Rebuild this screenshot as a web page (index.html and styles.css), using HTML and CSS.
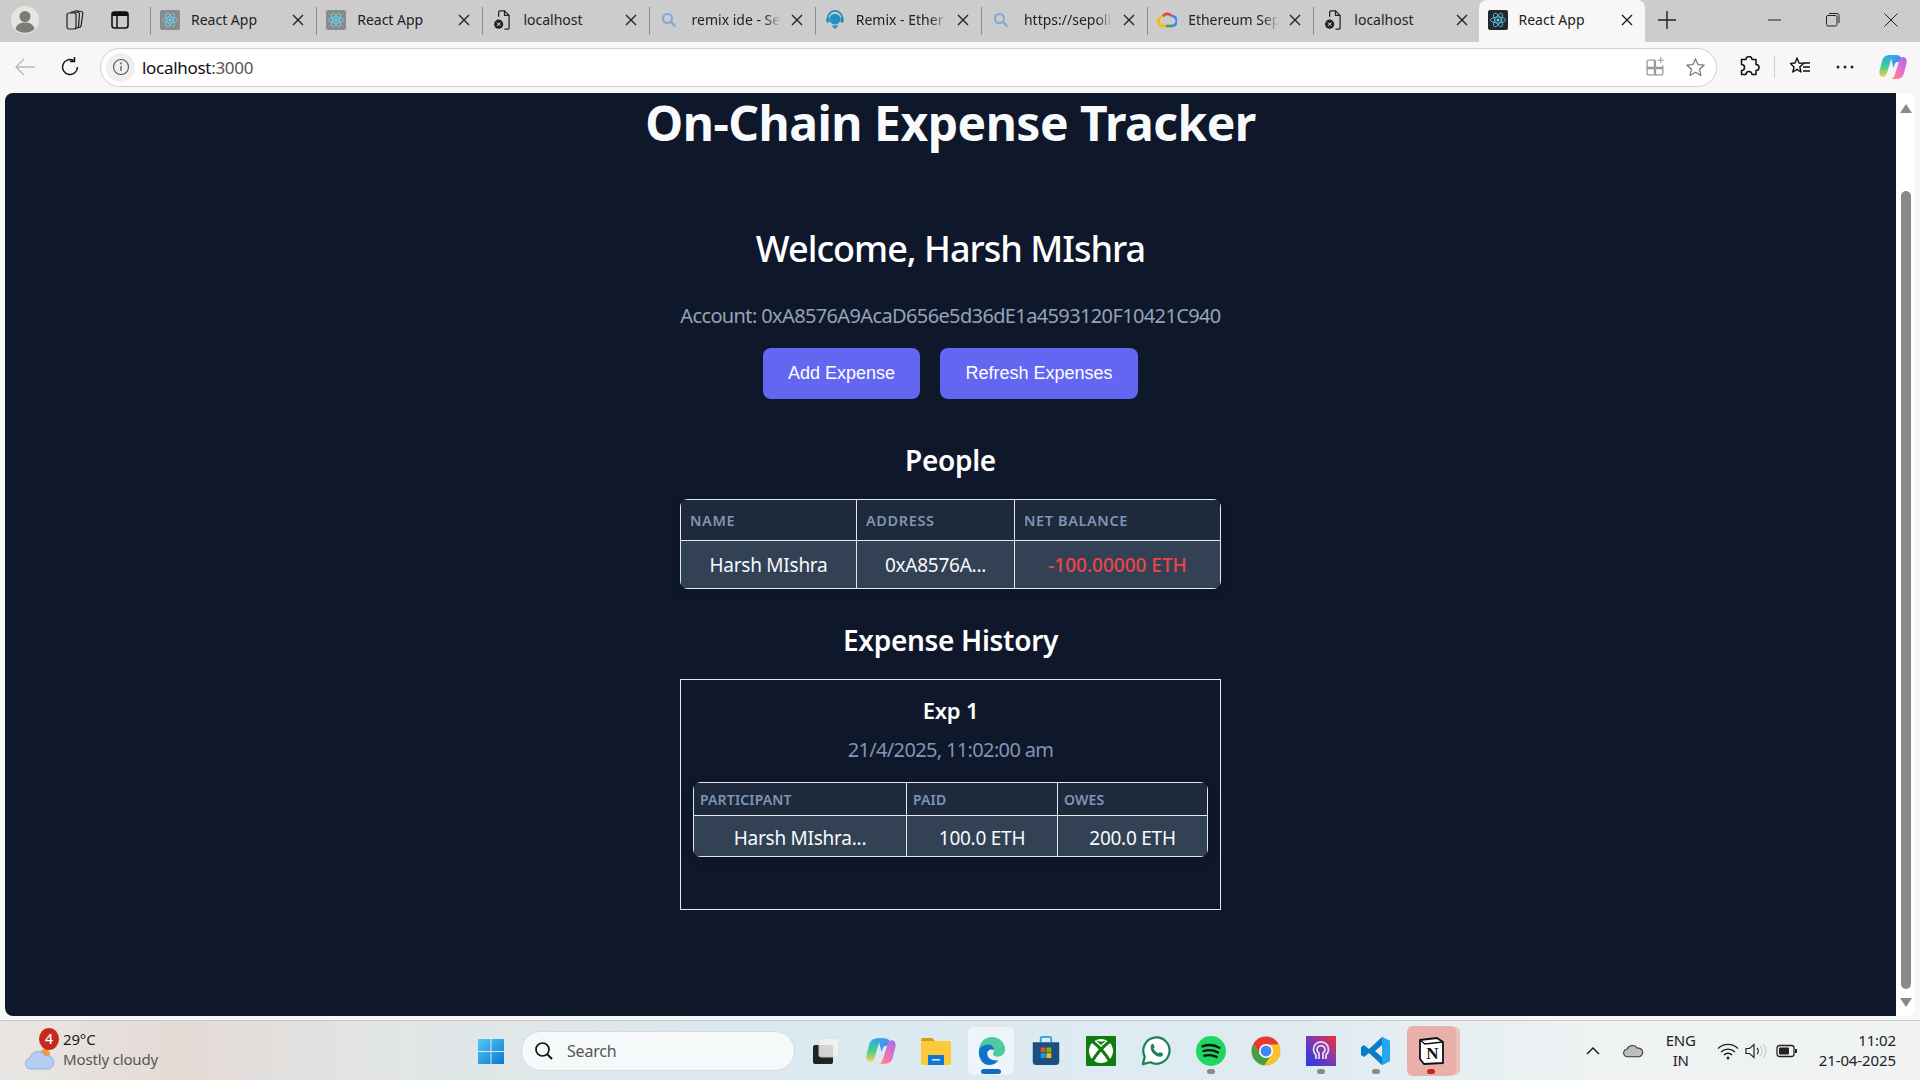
FILE: index.html
```html
<!DOCTYPE html>
<html lang="en">
<head>
<meta charset="utf-8">
<title>React App</title>
<link rel="stylesheet" href="styles.css">
</head>
<body>
<svg class="defs" width="0" height="0" aria-hidden="true">
  <defs>
    <linearGradient id="cp3" x1="0" y1="0" x2="0" y2="1"><stop offset="0" stop-color="#2aa8f0"/><stop offset=".55" stop-color="#45cf8a"/><stop offset="1" stop-color="#ffd040"/></linearGradient>
    <linearGradient id="cp2" x1="1" y1="0" x2="0" y2="1"><stop offset="0" stop-color="#a06cf0"/><stop offset=".55" stop-color="#f070c0"/><stop offset="1" stop-color="#ff9060"/></linearGradient>
    <linearGradient id="cp1" x1="0" y1="0" x2="1" y2="1"><stop offset="0" stop-color="#38a8f0"/><stop offset="1" stop-color="#4a7cf0"/></linearGradient>
  </defs>
  <symbol id="copilot" viewBox="0 0 28 28">
    <path d="M11 2h6c-3 0-4 2-5 5L8 20c-.7 2-2 4-4 4-3 0-4-3-3.500-6L3 8C4 4 7 2 11 2z" fill="url(#cp3)"/>
    <path d="M11 2h6c3 0 5 1 5.500 4l1 3h-4.500c-2 0-3 1-3.500 3l-1 3-2-8c-.3-3-1-5-1.500-5z" fill="url(#cp1)"/>
    <path d="M17 26h-6c3 0 4-2 5-5l4-13c.7-2 2-4 4-4 3 0 4 3 3.500 6L25 20c-1 4-4 6-8 6z" fill="url(#cp2)"/>
  </symbol>
  <symbol id="atom" viewBox="0 0 24 24">
    <g fill="none" stroke="#61dafb" stroke-width="1">
      <ellipse cx="12" cy="12" rx="10" ry="4"/>
      <ellipse cx="12" cy="12" rx="10" ry="4" transform="rotate(60 12 12)"/>
      <ellipse cx="12" cy="12" rx="10" ry="4" transform="rotate(120 12 12)"/>
    </g>
    <circle cx="12" cy="12" r="2" fill="#61dafb"/>
  </symbol>
  <symbol id="x" viewBox="0 0 12 12"><path d="M1 1l10 10M11 1L1 11" fill="none" stroke="#222" stroke-width="1.400"/></symbol>
  <symbol id="filex" viewBox="0 0 20 24">
    <path d="M6 8V2.500A1.500 1.500 0 0 1 7.500 1h5.500l5.500 5.500v15A1.500 1.500 0 0 1 17 23h-4" fill="none" stroke="#222" stroke-width="1.500"/>
    <path d="M13 1v5.500h5.500" fill="none" stroke="#222" stroke-width="1.500"/>
    <circle cx="6" cy="17" r="5.500" fill="#222"/>
    <path d="M4 15l4 4M8 15l-4 4" stroke="#fff" stroke-width="1.200"/>
  </symbol>
  <symbol id="mag" viewBox="0 0 16 16"><circle cx="6.500" cy="6.500" r="4.500" fill="none" stroke="#7fa9d4" stroke-width="2"/><path d="M10 10l4.500 4.500" stroke="#7fa9d4" stroke-width="2.200"/></symbol>
</svg>

<div class="browser">
  <header class="tabstrip">
    <div class="strip-left">
      <svg class="avatar" viewBox="0 0 28 28"><circle cx="14" cy="14" r="14" fill="#e6e6e0"/><circle cx="14" cy="10.500" r="5.500" fill="#7b7b78"/><path d="M4.500 23c1-5 5-6.500 9.500-6.500s8.500 1.500 9.500 6.500A14 14 0 0 1 4.500 23z" fill="#7b7b78"/></svg>
      <svg class="strip-ico" viewBox="0 0 22 22"><g fill="none" stroke="#222" stroke-width="1.200"><rect x="9" y="2" width="9" height="16" rx="2" transform="rotate(8 13 10)"/><rect x="6" y="3" width="9" height="16" rx="2" transform="rotate(4 10 11)" fill="#ccc"/><rect x="3" y="4" width="9" height="16" rx="2" fill="#ccc"/></g></svg>
      <svg class="strip-ico strip-ico-last" viewBox="0 0 22 22"><rect x="3" y="3" width="16" height="16" rx="2.500" fill="none" stroke="#111" stroke-width="1.600"/><path d="M3 5.500A2.500 2.500 0 0 1 5.500 3h11A2.500 2.500 0 0 1 19 5.500V7H3z" fill="#111"/><path d="M8 7v12" stroke="#111" stroke-width="1.500"/></svg>
    </div>
    <div class="tabs">
      <div class="tab"><span class="fav fav-grey"><svg class="fav-in"><use href="#atom"/></svg></span><span class="tab-title">React App</span><svg class="tab-x"><use href="#x"/></svg></div>
      <div class="tab"><span class="fav fav-grey"><svg class="fav-in"><use href="#atom"/></svg></span><span class="tab-title">React App</span><svg class="tab-x"><use href="#x"/></svg></div>
      <div class="tab"><svg class="fav"><use href="#filex"/></svg><span class="tab-title">localhost</span><svg class="tab-x"><use href="#x"/></svg></div>
      <div class="tab"><svg class="fav fav-mag"><use href="#mag"/></svg><span class="tab-title tab-fade">remix ide - Se</span><svg class="tab-x"><use href="#x"/></svg></div>
      <div class="tab"><svg class="fav" viewBox="0 0 20 22"><circle cx="10" cy="10" r="6" fill="#1f8fc4"/><path d="M2 13V9a8 8 0 0 1 16 0v4" fill="none" stroke="#1f8fc4" stroke-width="2"/><rect x="0.500" y="8" width="3.500" height="6" rx="1.500" fill="#1f8fc4"/><rect x="16" y="8" width="3.500" height="6" rx="1.500" fill="#1f8fc4"/><path d="M6 17h8l-4 4z" fill="#1f8fc4"/></svg><span class="tab-title tab-fade">Remix - Ether</span><svg class="tab-x"><use href="#x"/></svg></div>
      <div class="tab"><svg class="fav fav-mag"><use href="#mag"/></svg><span class="tab-title tab-fade">https://sepoli</span><svg class="tab-x"><use href="#x"/></svg></div>
      <div class="tab"><svg class="fav" viewBox="0 0 20 20"><path d="M6 6.500A5 5 0 0 1 14.500 6" fill="none" stroke="#ea4335" stroke-width="2.600"/><path d="M14.500 6A5 5 0 0 1 15 16" fill="none" stroke="#4285f4" stroke-width="2.600"/><path d="M15 16H9" fill="none" stroke="#34a853" stroke-width="2.600"/><path d="M9 16H5.500a4.500 4.500 0 0 1-1-8.800" fill="none" stroke="#fbbc05" stroke-width="2.600"/></svg><span class="tab-title tab-fade">Ethereum Sep</span><svg class="tab-x"><use href="#x"/></svg></div>
      <div class="tab"><svg class="fav"><use href="#filex"/></svg><span class="tab-title">localhost</span><svg class="tab-x"><use href="#x"/></svg></div>
      <div class="tab tab-active"><span class="fav fav-dark"><svg class="fav-in"><use href="#atom"/></svg></span><span class="tab-title">React App</span><svg class="tab-x"><use href="#x"/></svg></div>
      <svg class="newtab" viewBox="0 0 18 18"><path d="M9 0v18M0 9h18" stroke="#222" stroke-width="1.400"/></svg>
    </div>
    <div class="winctl">
      <svg class="win-ico" viewBox="0 0 14 14"><path d="M0 7h13" stroke="#222" stroke-width="1"/></svg>
      <svg class="win-ico" viewBox="0 0 14 14"><rect x="0.500" y="2.500" width="10.500" height="10.500" rx="1.500" fill="none" stroke="#222"/><path d="M3 .5h8a2 2 0 0 1 2 2V10" fill="none" stroke="#222"/></svg>
      <svg class="win-ico" viewBox="0 0 14 14"><path d="M.5.500l13 13M13.500.500l-13 13" stroke="#222" stroke-width="1"/></svg>
    </div>
  </header>

  <nav class="toolbar">
    <svg class="back" viewBox="0 0 22 20"><path d="M21 10H2M10 2l-8 8 8 8" fill="none" stroke="#b9b9b9" stroke-width="1.400"/></svg>
    <svg class="reload" viewBox="0 0 22 22"><path d="M18.500 11A7.500 7.500 0 1 1 14.500 4.400M15.500 1v4.500H11" fill="none" stroke="#111" stroke-width="1.500"/></svg>
    <div class="addressbar">
      <span class="info"><svg class="info-ico" viewBox="0 0 18 18"><circle cx="9" cy="9" r="7.500" fill="none" stroke="#555" stroke-width="1.100"/><path d="M9 8v5" stroke="#555" stroke-width="1.300"/><circle cx="9" cy="5.500" r="0.900" fill="#555"/></svg></span>
      <span class="url">localhost<span class="url-port">:3000</span></span>
      <span class="spacer"></span>
      <svg class="addr-ico" viewBox="0 0 20 20"><path d="M9 3H3a1 1 0 0 0-1 1v6h7zM2 11v5a1 1 0 0 0 1 1h6v-6zM10 11v6h6a1 1 0 0 0 1-1v-5zM10 10V3M10 10h7V8" fill="none" stroke="#999" stroke-width="1.200"/><path d="M15 0v6M12 3h6" stroke="#999" stroke-width="1"/></svg>
      <svg class="addr-ico" viewBox="0 0 22 22"><path d="M11 2l2.700 6 6.300.600-4.800 4.300 1.500 6.400L11 16l-5.700 3.300 1.500-6.400L2 8.600 8.300 8z" fill="none" stroke="#777" stroke-width="1.300" stroke-linejoin="round"/></svg>
    </div>
    <div class="tools">
      <svg class="tool" viewBox="0 0 22 22"><path d="M8 3.500a3 3 0 0 1 6 0h4v5a3 3 0 0 1 0 6v4h-4a3 3 0 0 0-6 0H3.500v-4a3 3 0 0 0 0-6v-5z" fill="none" stroke="#111" stroke-width="1.500" stroke-linejoin="round"/></svg>
      <span class="tool-div"></span>
      <svg class="tool" viewBox="0 0 22 22"><path d="M8 2l2 5 4.500.400L10.800 11l1.200 5-4-2.700L3.800 16 5 11 1.500 7.400 6 7z" fill="none" stroke="#111" stroke-width="1.400" stroke-linejoin="round"/><path d="M14 7h7M14 11h7M14 15h7" stroke="#111" stroke-width="1.300"/></svg>
      <svg class="tool" viewBox="0 0 22 22"><circle cx="4" cy="11" r="1.500" fill="#222"/><circle cx="11" cy="11" r="1.500" fill="#222"/><circle cx="18" cy="11" r="1.500" fill="#222"/></svg>
      <svg class="tool tool-copilot" viewBox="0 0 28 28"><use href="#copilot"/></svg>
    </div>
  </nav>

  <div class="viewport">
    <main class="page">
      <h1 class="title">On-Chain Expense Tracker</h1>
      <h2 class="welcome">Welcome, Harsh MIshra</h2>
      <p class="account">Account: 0xA8576A9AcaD656e5d36dE1a4593120F10421C940</p>
      <div class="actions">
        <button class="btn btn-add" type="button">Add Expense</button>
        <button class="btn btn-refresh" type="button">Refresh Expenses</button>
      </div>
      <h3 class="section">People</h3>
      <table class="grid grid-people">
        <colgroup><col class="c-name"><col class="c-addr"><col class="c-bal"></colgroup>
        <thead><tr><th>Name</th><th>Address</th><th>Net Balance</th></tr></thead>
        <tbody><tr><td>Harsh MIshra</td><td>0xA8576A...</td><td class="neg">-100.00000 ETH</td></tr></tbody>
      </table>
      <h3 class="section section-history">Expense History</h3>
      <article class="card">
        <h4 class="card-title">Exp 1</h4>
        <p class="card-date">21/4/2025, 11:02:00 am</p>
        <table class="grid grid-exp">
          <colgroup><col class="c-part"><col class="c-paid"><col class="c-owes"></colgroup>
          <thead><tr><th>Participant</th><th>Paid</th><th>Owes</th></tr></thead>
          <tbody><tr><td>Harsh MIshra...</td><td>100.0 ETH</td><td>200.0 ETH</td></tr></tbody>
        </table>
      </article>
    </main>
    <aside class="scrollbar">
      <span class="sb-up"></span>
      <span class="sb-thumb"></span>
      <span class="sb-down"></span>
    </aside>
  </div>

  <footer class="taskbar">
    <div class="weather">
      <span class="weather-ico">
        <svg class="cloud" viewBox="0 0 32 26"><circle cx="21" cy="9" r="5" fill="#f29b38"/><path d="M7 24a5.500 5.500 0 0 1-1-10.900A8 8 0 0 1 21 11a6.500 6.500 0 0 1 4 13z" fill="#b5cdf2" stroke="#8fb2e6"/></svg>
        <span class="badge">4</span>
      </span>
      <span class="weather-text"><span class="temp">29°C</span><span class="cond">Mostly cloudy</span></span>
    </div>
    <div class="center-icons">
      <svg class="start" viewBox="0 0 26 26"><defs><linearGradient id="wg" x1="0" y1="0" x2="1" y2="1"><stop offset="0" stop-color="#52c8f8"/><stop offset="1" stop-color="#0a78d4"/></linearGradient></defs><path d="M0 1h12.500v12H0zM13.500 1H26v12H13.500zM0 14h12.500v12H0zM13.500 14H26v12H13.500z" fill="url(#wg)"/></svg>
      <div class="search"><svg class="search-ico" viewBox="0 0 20 20"><circle cx="8.500" cy="8.500" r="6.500" fill="none" stroke="#111" stroke-width="1.700"/><path d="M13 13l5 5" stroke="#111" stroke-width="2"/></svg><span class="search-text">Search</span></div>
      <div class="apps">
        <span class="app"><svg class="app-ico" viewBox="0 0 30 30"><rect x="2" y="9" width="20" height="19" rx="2" fill="#222"/><rect x="8" y="2" width="20" height="19" rx="2" fill="#f2f2f2" opacity=".85" stroke="#ddd"/></svg></span>
        <span class="app"><svg class="app-ico" viewBox="0 0 28 28"><use href="#copilot"/></svg></span>
        <span class="app"><svg class="app-ico" viewBox="0 0 30 30"><path d="M0 4a2 2 0 0 1 2-2h9l3 3h-14z" fill="#d79c0a"/><rect y="5" width="30" height="24" rx="1.500" fill="#fcc93c"/><path d="M8 19h14a1 1 0 0 1 1 1v9H7v-9a1 1 0 0 1 1-1z" fill="#0f78d4"/><rect x="11" y="23" width="8" height="1.600" fill="#cfe6fb"/></svg></span>
        <span class="app app-on"><svg class="app-ico" viewBox="0 0 32 32"><path d="M3 17C3 7 9 1 17 1c8 0 14 6 14 13 0 5-4 8-8 8-3 0-5-1-5-3 0-1 1-1.500 1-3 0-3-3-5-6-5C8 11 3 12 3 17z" fill="#4fc9a0"/><path d="M3 17c0-5 5-8 10-8 4 0 6 3 6 6-2-1-7-1-7 4 0 5 6 8 12 7-3 3-6 5-10 5C8 31 3 25 3 17z" fill="#0f73c9"/></svg><span class="mark mark-blue"></span></span>
        <span class="app"><svg class="app-ico" viewBox="0 0 30 34"><path d="M9 7V3a2 2 0 0 1 2-2h8a2 2 0 0 1 2 2v4" fill="none" stroke="#1fa3e8" stroke-width="2"/><path d="M0 7h30v22a4 4 0 0 1-4 4H4a4 4 0 0 1-4-4z" fill="#1c4e80"/><rect x="9" y="13" width="5.500" height="5.500" fill="#f25022"/><rect x="15.500" y="13" width="5.500" height="5.500" fill="#7fba00"/><rect x="9" y="19.500" width="5.500" height="5.500" fill="#00a4ef"/><rect x="15.500" y="19.500" width="5.500" height="5.500" fill="#ffb900"/></svg></span>
        <span class="app"><svg class="app-ico" viewBox="0 0 30 30"><rect width="30" height="30" rx="1" fill="#107c10"/><circle cx="15" cy="15" r="12" fill="#fff"/><path d="M6.500 5.500C11 9 19 17 24 25.500M23.500 5.500C19 9 11 17 6 25.500" fill="none" stroke="#107c10" stroke-width="3"/><path d="M10 4.500c3 1.500 7 1.500 10 0L15 9z" fill="#107c10"/></svg></span>
        <span class="app"><svg class="app-ico" viewBox="0 0 32 32"><path d="M2 30l2-8A14 14 0 1 1 10 28z" fill="#fff" stroke="#1d8258" stroke-width="2.400" stroke-linejoin="round"/><path d="M11 9c1-1 2-1 2.500 0l1 2.500c.2.600-1 1.500-1 2 1 2 3 4 5 5 .5 0 1.500-1.500 2-1.300l2.500 1.300c1 .5.500 2-.5 3-2 1.500-6 .5-9-2.500s-4-7.500-2.500-10z" fill="#1d8258"/></svg></span>
        <span class="app"><svg class="app-ico app-tall" viewBox="0 0 32 32"><circle cx="16" cy="16" r="16" fill="#1ed760"/><path d="M7 11c6-2 13-1.500 18 1.500M8 16c5-1.500 11-1 15.500 1.500M9 21c4-1 9-.7 13 1.300" fill="none" stroke="#121212" stroke-width="2.500" stroke-linecap="round"/></svg><span class="mark mark-grey"></span></span>
        <span class="app"><svg class="app-ico" viewBox="0 0 32 32"><circle cx="16" cy="16" r="15.500" fill="#fbc02d"/><path d="M16 .5A15.500 15.500 0 0 0 2.600 8.300L9 19 16 9h13.400A15.500 15.500 0 0 0 16 .5z" fill="#e53935"/><path d="M2.600 8.300A15.500 15.500 0 0 0 14 31.400L21 21l-12-2z" fill="#43a047"/><circle cx="16" cy="16" r="7.500" fill="#fff"/><circle cx="16" cy="16" r="5.800" fill="#4285f4"/></svg></span>
        <span class="app"><svg class="app-ico" viewBox="0 0 30 30"><defs><linearGradient id="pg" x1="0" y1="1" x2="1" y2="0"><stop offset="0" stop-color="#1f3be8"/><stop offset=".6" stop-color="#8c3aa8"/><stop offset="1" stop-color="#ff2a2a"/></linearGradient></defs><rect width="30" height="30" fill="url(#pg)"/><path d="M10 23v-4a7.500 7.500 0 1 1 10 0v4M13 23v-6a4 4 0 1 1 4 0v6" fill="none" stroke="#eadcf2" stroke-width="1.800"/></svg><span class="mark mark-grey"></span></span>
        <span class="app"><svg class="app-ico" viewBox="0 0 30 30"><path d="M21 1l8 4v20l-8 4L8 17l-5 4-3-2v-8l3-2 5 4zM21 9l-7 6 7 6z" fill="#0a7cc9"/><path d="M21 1l8 4v20l-8 4z" fill="#22a7f0"/></svg><span class="mark mark-grey"></span></span>
        <span class="app app-notion"><svg class="app-ico" viewBox="0 0 30 30"><path d="M4 4l17-2 6 4v21L8 28l-4-5z" fill="#fff" stroke="#111" stroke-width="1.800" stroke-linejoin="round"/><path d="M4 4l5 4 18-2" fill="none" stroke="#111" stroke-width="1.400"/><text class="notion-n" x="16.500" y="23" text-anchor="middle">N</text></svg><span class="mark mark-red"></span></span>
      </div>
    </div>
    <div class="tray">
      <svg class="tray-chev" viewBox="0 0 14 8"><path d="M1 7l6-6 6 6" fill="none" stroke="#111" stroke-width="1.400"/></svg>
      <svg class="tray-cloud" viewBox="0 0 22 14"><path d="M5 13a4 4 0 0 1-.6-8A6 6 0 0 1 15 4a4.500 4.500 0 0 1 2 9z" fill="#bdbdbd" stroke="#333" stroke-width="1.100"/></svg>
      <span class="lang">ENG<br>IN</span>
      <svg class="tray-wifi" viewBox="0 0 22 18"><path d="M1 6.500a14 14 0 0 1 20 0M4 10a10 10 0 0 1 14 0M7 13a5.500 5.500 0 0 1 8 0" fill="none" stroke="#222" stroke-width="1.300"/><circle cx="11" cy="16" r="1.500" fill="#222"/></svg>
      <svg class="tray-vol" viewBox="0 0 22 18"><path d="M1 6.500h3.500L9 2.500v13l-4.500-4H1z" fill="none" stroke="#222" stroke-width="1.200"/><path d="M12 6a4 4 0 0 1 0 6" fill="none" stroke="#222" stroke-width="1.100"/><path d="M15 4a7 7 0 0 1 0 10M18 2a10 10 0 0 1 0 14" fill="none" stroke="#c9c9c9" stroke-width="1.100"/></svg>
      <svg class="tray-bat" viewBox="0 0 22 14"><rect x="1" y="1.500" width="17" height="11" rx="2.500" fill="none" stroke="#222" stroke-width="1.300"/><rect x="3" y="3.500" width="10" height="7" rx="1" fill="#222"/><rect x="19" y="5" width="2" height="4" fill="#222"/></svg>
      <span class="clock"><span>11:02</span><span>21-04-2025</span></span>
    </div>
  </footer>
</div>
</body>
</html>
```

FILE: styles.css
```css
* { box-sizing: border-box; }
html, body { margin: 0; padding: 0; height: 100%; overflow: hidden; }
body { font-family: "Noto Sans", "Open Sans", sans-serif; background: #f7f7f7; color: #222; }
.defs { display: block; width: 0; height: 0; overflow: hidden; }
h1, h2, h3, h4, p { margin: 0; }

.browser { display: flex; flex-direction: column; height: 1080px; width: 1920px; }

/* tab strip */
.tabstrip { display: flex; height: 42px; background: #cccccc; align-items: stretch; flex: none; }
.strip-left { display: flex; align-items: center; width: 150px; flex: none; padding: 0 0 2px 11px; }
.avatar { width: 28px; height: 28px; margin-right: 25px; flex: none; }
.strip-ico { width: 22px; height: 22px; margin-right: 23px; flex: none; }
.strip-ico-last { margin-right: 0; }
.tabs { display: flex; align-items: stretch; flex: 1; min-width: 0; }
.tab { width: 166.200px; display: flex; align-items: center; padding: 0 12px 2px 9px; border-left: 1px solid #8e8e8e; position: relative; flex: none; border-image: linear-gradient(#ccc 8px, #8e8e8e 8px, #8e8e8e 34px, #ccc 34px) 1; }
.tab-active { background: #f7f7f7; border: 0; border-radius: 8px 8px 0 0; padding-left: 9px; margin-left: -1px; }
.fav { width: 20px; height: 20px; flex: none; margin-right: 11px; display: flex; align-items: center; justify-content: center; }
.fav-grey { background: #8a8a8a; border-radius: 2px; }
.fav-dark { background: #23272f; border-radius: 2px; }
.fav-in { width: 18px; height: 18px; }
.fav-mag { width: 16px; height: 16px; margin-left: 2px; margin-right: 15px; }
.tab-title { flex: 1; min-width: 0; overflow: hidden; white-space: nowrap; font-size: 14px; line-height: 18px; letter-spacing: 0; color: #222; margin-top: -1px; }
.tab-fade { -webkit-mask-image: linear-gradient(90deg, #000 82%, transparent 100%); mask-image: linear-gradient(90deg, #000 82%, transparent 100%); }
.tab-x { width: 12px; height: 12px; flex: none; margin-left: 10px; }
.newtab { width: 18px; height: 18px; align-self: center; margin: 0 0 3px 13px; flex: none; }
.winctl { display: flex; align-items: center; gap: 44px; margin-right: 22px; padding-bottom: 2px; flex: none; }
.win-ico { width: 14px; height: 14px; }

/* toolbar */
.toolbar { display: flex; align-items: center; height: 51px; background: #f7f7f7; flex: none; padding-bottom: 1px; }
.back { width: 22px; height: 20px; margin-left: 14px; flex: none; }
.reload { width: 22px; height: 22px; margin-left: 23px; flex: none; }
.addressbar { display: flex; align-items: center; margin-left: 19px; width: 1617px; height: 39px; background: #fff; border: 1px solid #cfcfcf; border-radius: 20px; padding: 0 10px 0 5px; flex: none; }
.info { width: 29px; height: 29px; border-radius: 50%; background: #efefef; display: flex; align-items: center; justify-content: center; flex: none; }
.info-ico { width: 18px; height: 18px; }
.url { margin-left: 7px; font-size: 17px; letter-spacing: -.3px; color: #111; }
.url-port { color: #555; }
.spacer { flex: 1; }
.addr-ico { width: 21px; height: 21px; margin-left: 19px; }
.tools { display: flex; align-items: center; margin-left: 21px; flex: 1; }
.tool { width: 22px; height: 22px; flex: none; }
.tool-div { width: 1px; height: 22px; background: #ccc; margin: 0 14px; flex: none; }
.tool + .tool { margin-left: 23px; }
.tool.tool-copilot { width: 28px; height: 28px; margin-left: 23px; }

/* viewport */
.viewport { flex: none; height: 923px; display: flex; padding-left: 5px; }
.page { width: 1891px; background: #0f172a; border-radius: 8px 0 0 8px; color: #f8fafc; display: flex; flex-direction: column; align-items: center; text-align: center; padding-top: 4px; }
.title { font-size: 48px; line-height: 58px; font-weight: 700; letter-spacing: -.5px; margin-top: -3px; }
.welcome { font-size: 36px; line-height: 44px; font-weight: 500; margin-top: 75px; letter-spacing: -1px; color: #fff; }
.account { font-size: 20px; line-height: 26px; color: #94a3b8; margin-top: 32px; letter-spacing: -.63px; }
.actions { display: flex; gap: 20px; margin-top: 19px; }
.btn { height: 51px; border: 0; border-radius: 8px; background: #6366f1; color: #fff; font-family: "Liberation Sans", Arial, sans-serif; font-size: 18px; }
.btn-add { width: 157px; }
.btn-refresh { width: 198px; }
.section { font-size: 28px; line-height: 36px; font-weight: 600; margin-top: 43px; letter-spacing: -.3px; color: #fff; }
.section-history { margin-top: 33px; }

.grid { border-collapse: separate; border-spacing: 0; table-layout: fixed; border-radius: 8px; overflow: hidden; box-shadow: 0 4px 12px rgba(0, 0, 0, .12); }
.grid th { background: #1e293b; color: #7f95b5; text-transform: uppercase; text-align: left; font-weight: 600; border-top: 1px solid #e2e8f0; border-right: 1px solid #e2e8f0; border-bottom: 1px solid #e2e8f0; padding: 0 0 0 9px; }
.grid td { background: #334155; color: #f8fafc; text-align: center; border-right: 1px solid #e2e8f0; border-bottom: 1px solid #e2e8f0; padding: 1px 0 0; font-size: 19px; letter-spacing: -.25px; }
.grid th:first-child, .grid td:first-child { border-left: 1px solid #e2e8f0; }
.grid-people { width: 541px; margin-top: 21px; }
.grid-people th { height: 42px; font-size: 14.500px; letter-spacing: .6px; }
.grid-people td { height: 48px; }
.c-name { width: 177px; }
.c-addr { width: 158px; }
.c-bal { width: 206px; }
.grid-people td.neg { color: #ef4444; font-weight: 500; letter-spacing: 0; }

.card { width: 541px; height: 231px; margin-top: 21px; border: 1px solid #e2e8f0; padding: 13px 12px 0; }
.card-title { font-size: 22px; line-height: 34px; font-weight: 600; letter-spacing: -.2px; color: #fff; }
.card-date { font-size: 20px; line-height: 26px; color: #7f95b5; margin-top: 10px; letter-spacing: -.65px; }
.grid-exp { width: 515px; margin-top: 19px; }
.grid-exp th { height: 34px; font-size: 14px; padding-left: 6px; letter-spacing: .15px; }
.grid-exp td { height: 41px; padding-top: 3px; }
.c-part { width: 214px; }
.c-paid { width: 151px; }
.c-owes { width: 150px; }

/* scrollbar */
.scrollbar { width: 19px; background: #fff; border-radius: 0 8px 8px 0; display: flex; flex-direction: column; align-items: center; padding-top: 11px; flex: none; }
.sb-up { width: 0; height: 0; border-left: 6px solid transparent; border-right: 6px solid transparent; border-bottom: 9px solid #8a8a8a; }
.sb-thumb { width: 10px; height: 798px; background: #8a8a8a; border-radius: 5px; margin-top: 78px; }
.sb-down { width: 0; height: 0; border-left: 6px solid transparent; border-right: 6px solid transparent; border-top: 9px solid #8a8a8a; margin-top: 9px; }

/* taskbar */
.taskbar { margin-top: 4px; height: 60px; flex: none; display: flex; align-items: center; border-top: 1px solid #c8cbcd; background: linear-gradient(90deg, #e9e7e3 0, #e4dad6 180px, #e1e6e6 400px, #dbe9f1 800px, #dfebf1 1300px, #eef2f3 1600px, #f0f2f3 100%); position: relative; }
.weather { display: flex; align-items: center; width: 470px; padding-left: 24px; flex: none; }
.weather-ico { width: 34px; height: 40px; position: relative; flex: none; margin-right: 5px; }
.cloud { width: 32px; height: 26px; position: absolute; left: 0; bottom: 0; }
.badge { position: absolute; left: 15px; top: -3px; width: 20px; height: 22px; border-radius: 50%; background: #c42b1c; color: #fff; font-size: 14px; line-height: 22px; font-weight: 500; text-align: center; }
.weather-text { display: flex; flex-direction: column; font-size: 15px; line-height: 20px; letter-spacing: -.15px; margin-top: -3px; }
.temp { color: #1a1a1a; }
.cond { color: #555; }
.center-icons { display: flex; align-items: center; flex: none; margin-left: 1px; }
.start { width: 26px; height: 28px; margin-left: 7px; }
.search { width: 274px; height: 40px; margin-left: 17px; border-radius: 20px; background: #f6f9fa; border: 1px solid #d5dcdf; display: flex; align-items: center; padding-left: 12px; }
.search-ico { width: 20px; height: 20px; }
.search-text { margin-left: 13px; font-size: 16px; letter-spacing: -.2px; color: #555; }
.apps { display: flex; margin-left: 3px; }
.app { width: 55px; height: 50px; display: flex; align-items: center; justify-content: center; position: relative; border-radius: 6px; }
.app-ico { width: 30px; height: 30px; position: relative; }
.app-ico.app-tall { height: 32px; }
.app-on::before { content: ""; position: absolute; left: 3.500px; right: 3.500px; top: 0; bottom: 0; background: #eef5f9; border: 1px solid #dfe7ec; border-radius: 6px; }
.app-notion::before { content: ""; position: absolute; left: 3.500px; right: 2.500px; top: 0; bottom: 0; background: #e9b0aa; border-radius: 6px; box-shadow: 5px 0 0 -1px #edc2bd; }
.notion-n { font-family: "Liberation Serif", serif; font-weight: 700; font-size: 17px; fill: #111; }
.mark { position: absolute; bottom: 2px; left: 50%; transform: translateX(-50%); height: 5px; border-radius: 3px; }
.mark-blue { width: 20px; background: #0f6cbd; }
.mark-grey { width: 8px; background: #8a8a8a; }
.mark-red { width: 8px; background: #c42b1c; }
.tray { position: absolute; right: 24px; top: 0; bottom: 0; display: flex; align-items: center; }
.tray-chev { width: 14px; height: 8px; }
.tray-cloud { width: 21px; height: 14px; margin-left: 23px; }
.lang { width: 44px; margin-left: 15px; text-align: center; font-size: 15px; line-height: 20px; letter-spacing: -.2px; color: #222; margin-top: -2px; }
.tray-wifi { width: 22px; height: 18px; margin-left: 14px; }
.tray-vol { width: 22px; height: 18px; margin-left: 6px; }
.tray-bat { width: 22px; height: 14px; margin-left: 9px; }
.clock { margin-left: 21px; display: flex; flex-direction: column; align-items: flex-end; font-size: 15px; line-height: 20px; letter-spacing: -.1px; color: #222; margin-top: -2px; }
```
